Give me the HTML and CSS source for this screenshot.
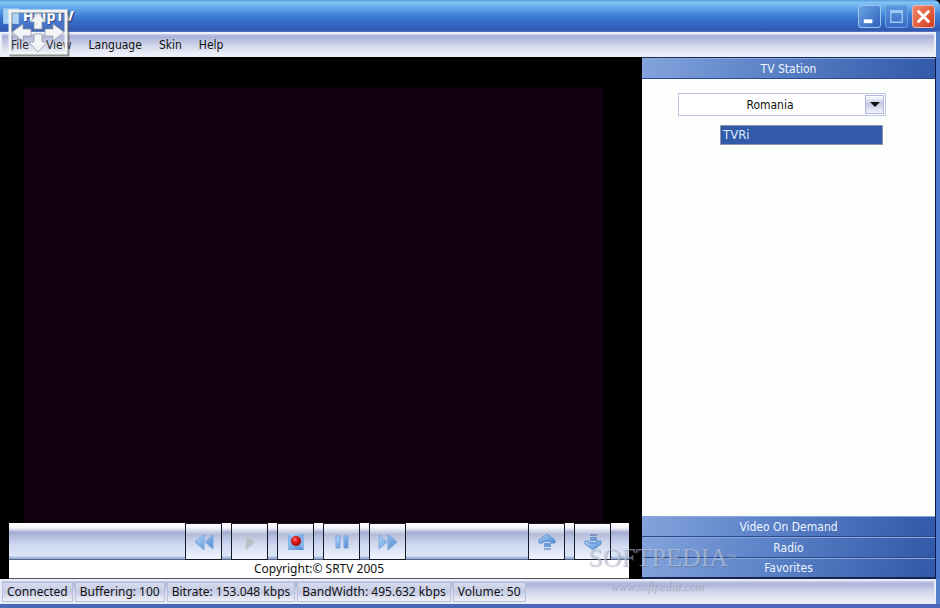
FILE: index.html
```html
<!DOCTYPE html>
<html lang="en">
<head>
    <meta charset="UTF-8">
    <meta name="viewport" content="width=device-width, initial-scale=1.0">
    <title>HelpTV</title>
    <link rel="stylesheet" href="styles.css">
</head>
<body>
    <svg class="defs" width="0" height="0" aria-hidden="true">
        <defs>
            <linearGradient id="blue" x1="0" y1="0" x2="1" y2="1">
                <stop offset="0" stop-color="#b4d8f8"/>
                <stop offset="1" stop-color="#4e86d0"/>
            </linearGradient>
            <radialGradient id="red" cx="0.4" cy="0.35" r="0.6">
                <stop offset="0" stop-color="#ff7a70"/>
                <stop offset="0.5" stop-color="#e01818"/>
                <stop offset="1" stop-color="#a80808"/>
            </radialGradient>
        </defs>
    </svg>

    <header class="titlebar">
        <span class="app-icon"></span>
        <h1>HelpTV</h1>
        <div class="window-buttons">
            <button class="win-btn" aria-label="Minimize"><svg width="21" height="21" viewBox="0 0 22 22"><rect x="5" y="14" width="9" height="4" fill="#fff"/></svg></button>
            <button class="win-btn dim" aria-label="Maximize"><svg width="21" height="21" viewBox="0 0 22 22"><path d="M5 5h12v12H5z" fill="none" stroke="#9cc8f6" stroke-width="1.5"/><path d="M5 6h12" stroke="#9cc8f6" stroke-width="3"/></svg></button>
            <button class="win-btn close" aria-label="Close"><svg width="21" height="21" viewBox="0 0 22 22"><path d="M5 5l12 12M17 5L5 17" stroke="#fff" stroke-width="3"/></svg></button>
        </div>
    </header>

    <nav class="menubar">
        <button>File</button>
        <button>View</button>
        <button>Language</button>
        <button>Skin</button>
        <button>Help</button>
    </nav>

    <main class="main">
        <section class="player">
            <div class="screen"></div>
            <div class="controls">
                <div class="playback">
                    <button aria-label="Rewind"><svg width="20" height="20" viewBox="0 0 20 20"><path d="M10 2v16L1 10zM19 3v14l-8-7z" fill="url(#blue)" stroke="#7ca8e0"/></svg></button>
                    <button aria-label="Play"><svg width="20" height="20" viewBox="0 0 20 20"><path d="M6 3l9 7-9 8z" fill="#b9bfc8" stroke="#c9cdd2"/></svg></button>
                    <button aria-label="Record"><svg width="20" height="20" viewBox="0 0 20 20"><rect x="2" y="2" width="16" height="16" fill="url(#blue)"/><path d="M2 2l4 5v7l-4 4M18 2l-4 5v7l4 4" fill="#86b7ec" stroke="#78aae4"/><circle cx="10" cy="9" r="5" fill="url(#red)"/></svg></button>
                    <button aria-label="Pause"><svg width="20" height="20" viewBox="0 0 20 20"><path d="M4 4h4v12H4zM12 4h4v12h-4z" fill="url(#blue)" stroke="#78a6e0"/></svg></button>
                    <button aria-label="Forward"><svg width="20" height="20" viewBox="0 0 20 20"><path d="M10 2v16l9-8zM1 3v14l8-7z" fill="url(#blue)" stroke="#7ca8e0"/></svg></button>
                </div>
                <div class="volume">
                    <button aria-label="Volume up"><svg width="20" height="20" viewBox="0 0 20 20"><path d="M10 2l8 6v3h-4V9H6v2H2V8z" fill="url(#blue)" stroke="#5d8fd0"/><path d="M7 9h7M7 12h7M7 14h7" stroke="#6b9cda" stroke-width="2"/><path d="M7 17h7" stroke="#3f6cab"/></svg></button>
                    <button aria-label="Volume down"><svg width="20" height="20" viewBox="0 0 20 20"><path d="M10 18l8-6V9h-4v2H6V9H2v3z" fill="url(#blue)" stroke="#5d8fd0"/><path d="M7 11h7M7 8h7M7 6h7" stroke="#6b9cda" stroke-width="2"/><path d="M7 3h7" stroke="#3f6cab"/></svg></button>
                </div>
            </div>
            <p class="copyright">Copyright:© SRTV 2005</p>
        </section>

        <aside class="sidebar">
            <button class="tab">TV Station</button>
            <div class="stations">
                <div class="country">
                    <select aria-label="Country">
                        <option>Romania</option>
                    </select>
                    <span class="arrow"><svg width="10" height="5" viewBox="0 0 12 6"><path d="M0 0h12L6 6z" fill="#111"/></svg></span>
                </div>
                <ul class="station-list">
                    <li><button>TVRi</button></li>
                </ul>
            </div>
            <button class="tab">Video On Demand</button>
            <button class="tab">Radio</button>
            <button class="tab">Favorites</button>
        </aside>
    </main>

    <footer class="statusbar">
        <span>Connected</span>
        <span>Buffering: 100</span>
        <span>Bitrate: 153.048 kbps</span>
        <span>BandWidth: 495.632 kbps</span>
        <span>Volume: 50</span>
    </footer>

    <div class="move-handle">
        <svg width="62" height="48" viewBox="0 0 62 48">
            <rect x="3" y="3" width="57" height="43" fill="none" stroke="#555" stroke-width="3" stroke-opacity="0.6"/>
            <rect x="2" y="2" width="56" height="42" fill="#fff" fill-opacity="0.1" stroke="#f0f2f4" stroke-width="3"/>
            <g fill="#f3f4f6" stroke="#8b929c" stroke-width="0.7">
                <path d="M30 4l8 9h-4v7h-8v-7h-4z"/>
                <path d="M30 43l9-10h-5v-8h-8v8h-5z"/>
                <path d="M4 23l11-8v5h8v7h-8v5z"/>
                <path d="M56 23l-11-8v5h-8v7h8v5z"/>
            </g>
        </svg>
    </div>
    <div class="watermark">
        <span class="brand">SOFTPEDIA<small>™</small></span>
        <span class="site">www.softpedia.com</span>
    </div>
</body>
</html>
```
FILE: styles.css
```css
* { box-sizing: border-box; }
body {
    margin: 0;
    height: 100vh;
    display: flex;
    flex-direction: column;
    position: relative;
    overflow: hidden;
    border-bottom: 4px solid #4a66b8;
    background: #000;
    font-family: "DejaVu Sans Condensed", "Noto Sans", sans-serif;
    font-size: 12px;
    line-height: 16px;
    color: #111;
}
button, select { font: inherit; color: inherit; margin: 0; padding: 0; border: none; background: none; border-radius: 0; }
.defs { position: absolute; }

/* title bar */
.titlebar {
    height: 32px;
    flex: none;
    display: flex;
    align-items: center;
    padding: 0 5px 0 3px;
    gap: 4px;
    border-radius: 0 6px 0 0;
    background: linear-gradient(#5a9ddc 0, #82c4f4 8%, #62a8ea 25%, #3f7fd6 50%, #3466c2 75%, #3159b0 95%, #5a78c0 100%);
}
.titlebar h1 { margin: 0; font-size: 14px; color: #fff; flex: 1; text-shadow: 1px 1px 1px #1c3a80; }
.app-icon { width: 16px; height: 16px; border: 1px solid #8fc0ee; background: #a7d0f4; }
.window-buttons { display: flex; gap: 4px; }
.win-btn {
    width: 23px;
    height: 23px;
    border: 1px solid #9cc4ee;
    border-radius: 3px;
    background: linear-gradient(135deg, #6ba4e4, #2f62bc);
}
.win-btn svg { display: block; }
.win-btn.dim { border-color: #6da2e2; background: linear-gradient(#5a98de, #3a6cc4); }
.win-btn.close { border-color: #e8b8b8; background: linear-gradient(135deg, #f08a68, #d23c20); }

/* menu */
.menubar {
    height: 25px;
    flex: none;
    display: flex;
    align-items: center;
    gap: 17px;
    padding-left: 11px;
    border-right: 4px solid #5580cc;
    box-shadow: inset 0 0 0 2px #eceffa;
    background: linear-gradient(#e4e8f5 0, #a8b0d6 18%, #cdd2e8 50%, #f6f7fc 100%);
}

.main { flex: 1; display: flex; min-height: 0; border-right: 4px solid #4a76cc; }

/* player */
.player { flex: 1; display: flex; flex-direction: column; padding: 30px 13px 0 9px; background: #000; }
.screen { flex: 1; margin: 0 26px 0 15px; background: #10000f; }
.controls {
    height: 37px;
    display: flex;
    justify-content: space-between;
    padding: 0 18px 0 176px;
    border-bottom: 1px solid #56678f;
    background: linear-gradient(#fff 0, #f2f4fb 14%, #a3acd0 26%, #b9c3e4 42%, #d3dcf3 65%, #d9e4f6 90%, #8fa4cc 100%);
}
.playback, .volume { display: flex; gap: 9px; }
.controls button {
    width: 37px;
    height: 37px;
    display: flex;
    align-items: center;
    justify-content: center;
    border: 1px solid #151a26;
    background: linear-gradient(#fff 0, #eef1f9 12%, #b4bcd9 30%, #ccd4eb 50%, #dde5f6 75%, #f0f4fc 100%);
}
.copyright { margin: 0; height: 19px; line-height: 18px; text-align: center; background: #fff; border-bottom: 1px solid #555; font-family: "Noto Sans", sans-serif; }

/* sidebar */
.sidebar { width: 294px; display: flex; flex-direction: column; background: #fdfffd; border-top: 1px solid #1b2c5c; border-right: 1px solid #0c1b4a; }
.tab {
    height: 21px;
    flex: none;
    color: #eef4ff;
    border-top: 1px solid #8aa8de;
    border-bottom: 1px solid #2b4a8c;
    background: linear-gradient(100deg, #83a4dc, #5a80c6 45%, #3259a8);
}
.tab:last-child { border-bottom: 2px solid #14244f; }
.stations { flex: 1; padding: 14px 49px 0 36px; }
.country { position: relative; }
.country select {
    appearance: none;
    display: block;
    width: 100%;
    height: 23px;
    padding-right: 24px;
    text-align: center;
    text-align-last: center;
    border: 1px solid #c0c2e6;
    background: #fff;
}
.arrow {
    position: absolute;
    top: 2px;
    right: 2px;
    width: 19px;
    height: 19px;
    display: flex;
    align-items: center;
    justify-content: center;
    border: 1px solid #b4b6e0;
    background: linear-gradient(#fff, #c3cae0 45%, #f2f4fc);
    pointer-events: none;
}
.station-list { list-style: none; margin: 9px 3px 0 42px; padding: 0; }
.station-list button {
    display: block;
    width: 100%;
    height: 20px;
    padding-left: 2px;
    text-align: left;
    font-size: 13px;
    color: #dce8ff;
    background: #315aa8;
    border: 1px solid #8d95a8;
}

/* status */
.statusbar {
    height: 25px;
    flex: none;
    display: flex;
    align-items: center;
    gap: 2px;
    padding: 0 2px;
    font-family: "Noto Sans", sans-serif;
    border-right: 4px solid #5580cc;
    box-shadow: inset 0 0 0 2px #e8ecf8;
    background: linear-gradient(#dfe4f4 0, #a9b2d8 20%, #ccd1e9 45%, #f4f5fc 100%);
}
.statusbar span { height: 20px; line-height: 18px; padding: 0 4px; border: 1px solid #b9bddb; background: linear-gradient(#d5daee, #c5cbe4 50%, #f0f2fa); white-space: nowrap; }

/* overlays */
.move-handle { position: absolute; left: 8px; top: 9px; }
.watermark { position: absolute; left: 588px; top: 543px; color: rgba(205, 215, 235, 0.5); font-family: "Liberation Serif", serif; text-shadow: 1px 1px 1px rgba(90, 100, 120, 0.4); pointer-events: none; }
.brand { display: block; font-size: 26px; line-height: 30px; }
.brand small { font-size: 8px; vertical-align: top; }
.site { display: block; padding-left: 22px; font-size: 12px; line-height: 26px; font-style: italic; }
```
